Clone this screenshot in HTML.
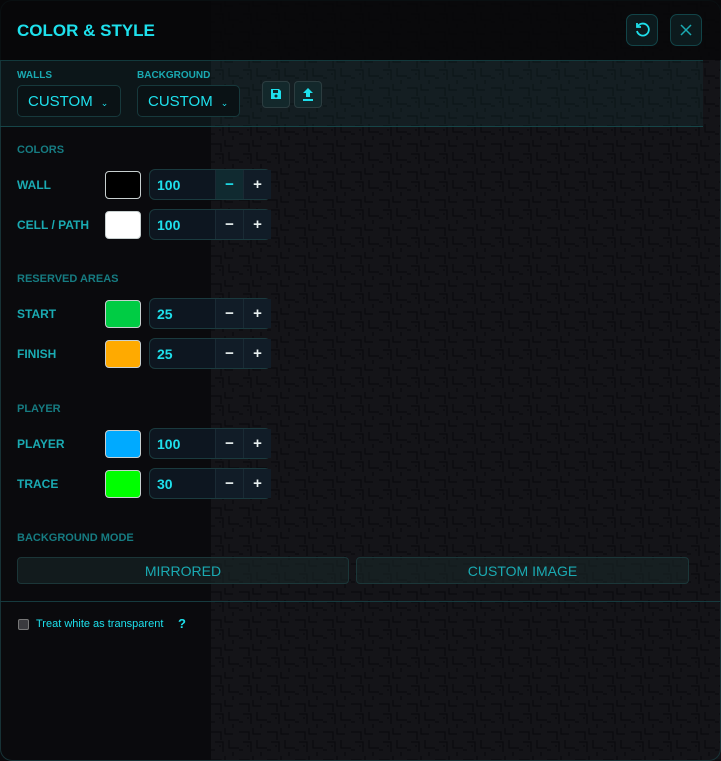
<!DOCTYPE html>
<html><head><style>
*{box-sizing:border-box;margin:0;padding:0}
body{width:721px;height:761px;background:#0a0a0d;font-family:"Liberation Sans",sans-serif;position:relative;overflow:hidden}
.maze{position:absolute;left:211px;top:0;width:510px;height:761px;background-color:#141418;
background-image:url("data:image/svg+xml,%3Csvg xmlns='http://www.w3.org/2000/svg' width='28' height='28'%3E%3Cpath d='M0 4h10v8M14 0v6h8M4 14h8v10M18 12v8h10M0 22h4M22 24v4M8 18h2' stroke='%230a0a0d' stroke-width='1.2' fill='none'/%3E%3C/svg%3E")}
.panel{position:absolute;left:0;top:0;width:721px;height:761px;border:1px solid #173236;border-radius:12px}
.hdr{position:absolute;left:0;top:0;width:721px;height:60px;background:rgba(6,6,9,0.8)}
.title{position:absolute;left:17px;top:21px;color:#1ee0ec;font-weight:bold;font-size:17px}
.ib{position:absolute;top:14px;width:32px;height:32px;border:1px solid #124448;border-radius:7px;background:#0c1a1d}
.band{position:absolute;left:0;top:60px;width:703px;height:67px;background:rgba(20,60,62,0.25);border-bottom:1px solid #164548;border-top:1px solid #12393c}
.lab{position:absolute;color:#1aaab2;font-size:10px;font-weight:bold}
.sel{position:absolute;top:85px;height:32px;border:1px solid #17393c;border-radius:5px;background:#0a1215;color:#1ee0ec;font-size:15px;padding:7px 10px}
.sel span{font-size:9px;margin-left:8px}
.sb{position:absolute;top:81px;width:28px;height:27px;border:1px solid #2c3d40;border-radius:4px;background:#13282b}
.sec{position:absolute;left:17px;color:#167c82;font-size:11px;font-weight:bold}
.rl{position:absolute;left:17px;color:#1aaab2;font-size:12px;font-weight:bold}
.sw{position:absolute;left:105px;width:36px;height:28px;border:1px solid #c8d0d0;border-radius:4px}
.num{position:absolute;left:149px;width:122px;height:31px;border:1px solid #1a3a3e;border-radius:6px;background:#0d1620}
.num b{position:absolute;left:7px;top:7px;color:#1ee0ec;font-size:14px}
.num i,.num u{position:absolute;top:0;width:28px;height:29px;font-style:normal;text-decoration:none;color:#e8f0f0;font-weight:bold;text-align:center;line-height:29px;font-size:15px;background:#111c27;border-left:1px solid #1a2a34}
.num i{left:65px}.num u{left:93px}
.bm{position:absolute;top:557px;height:27px;border:1px solid #1b3638;border-radius:4px;background:rgba(24,38,40,0.6);color:#1aaab2;font-size:14px;text-align:center;line-height:26px}
</style></head><body>
<div class="maze"></div>
<div class="panel"></div>
<div class="hdr"></div>
<div class="title">COLOR &amp; STYLE</div>
<div class="ib" style="left:626px"><svg width="30" height="30" viewBox="0 0 30 30"><path d="M11 11a6 6 0 1 1 -1 5" stroke="#1ee0ec" stroke-width="1.8" fill="none"/><path d="M10 8v4h4" stroke="#1ee0ec" stroke-width="1.8" fill="none"/></svg></div>
<div class="ib" style="left:670px"><svg width="30" height="30" viewBox="0 0 30 30"><path d="M10 10l10 10M20 10l-10 10" stroke="#1aaab2" stroke-width="1.5"/></svg></div>
<div class="band"></div>
<div class="lab" style="left:17px;top:70px">WALLS</div>
<div class="lab" style="left:137px;top:70px">BACKGROUND</div>
<div class="sel" style="left:17px;width:104px">CUSTOM<span>⌄</span></div>
<div class="sel" style="left:137px;width:103px">CUSTOM<span>⌄</span></div>
<div class="sb" style="left:262px"><svg width="26" height="25" viewBox="0 0 26 25"><path d="M8 7h8l2 2v8H8z" fill="#1ee0ec"/><rect x="10" y="8" width="5" height="3" fill="#13282b"/><circle cx="13" cy="14" r="1.5" fill="#13282b"/></svg></div>
<div class="sb" style="left:294px"><svg width="26" height="25" viewBox="0 0 26 25"><path d="M13 6l-5 5h3v4h4v-4h3z M8 17h10v2H8z" fill="#1ee0ec"/></svg></div>
<div class="sec" style="top:144px">COLORS</div>
<div class="rl" style="top:178px">WALL</div>
<div class="sw" style="top:171px;background:#000"></div>
<div class="num" style="top:169px"><b>100</b><i style="background:#102a30;color:#1ee0ec">−</i><u>+</u></div>
<div class="rl" style="top:218px">CELL / PATH</div>
<div class="sw" style="top:211px;background:#fff"></div>
<div class="num" style="top:209px"><b>100</b><i>−</i><u>+</u></div>
<div class="sec" style="top:273px">RESERVED AREAS</div>
<div class="rl" style="top:307px">START</div>
<div class="sw" style="top:300px;background:#00cc44"></div>
<div class="num" style="top:298px"><b>25</b><i>−</i><u>+</u></div>
<div class="rl" style="top:347px">FINISH</div>
<div class="sw" style="top:340px;background:#ffaa00"></div>
<div class="num" style="top:338px"><b>25</b><i>−</i><u>+</u></div>
<div class="sec" style="top:403px">PLAYER</div>
<div class="rl" style="top:437px">PLAYER</div>
<div class="sw" style="top:430px;background:#00aaff"></div>
<div class="num" style="top:428px"><b>100</b><i>−</i><u>+</u></div>
<div class="rl" style="top:477px">TRACE</div>
<div class="sw" style="top:470px;background:#00ff00"></div>
<div class="num" style="top:468px"><b>30</b><i>−</i><u>+</u></div>
<div class="sec" style="top:532px">BACKGROUND MODE</div>
<div class="bm" style="left:17px;width:332px">MIRRORED</div>
<div class="bm" style="left:356px;width:333px">CUSTOM IMAGE</div>
<div style="position:absolute;left:0;top:601px;width:721px;height:1px;background:#163a3e"></div>
<div style="position:absolute;left:18px;top:619px;width:11px;height:11px;border:1px solid #777;border-radius:2px;background:#3a3a3e"></div>
<div style="position:absolute;left:36px;top:618px;color:#1ee0ec;font-size:11px">Treat white as transparent</div>
<div style="position:absolute;left:178px;top:616px;color:#1ee0ec;font-size:13px;font-weight:bold">?</div>
</body></html>
